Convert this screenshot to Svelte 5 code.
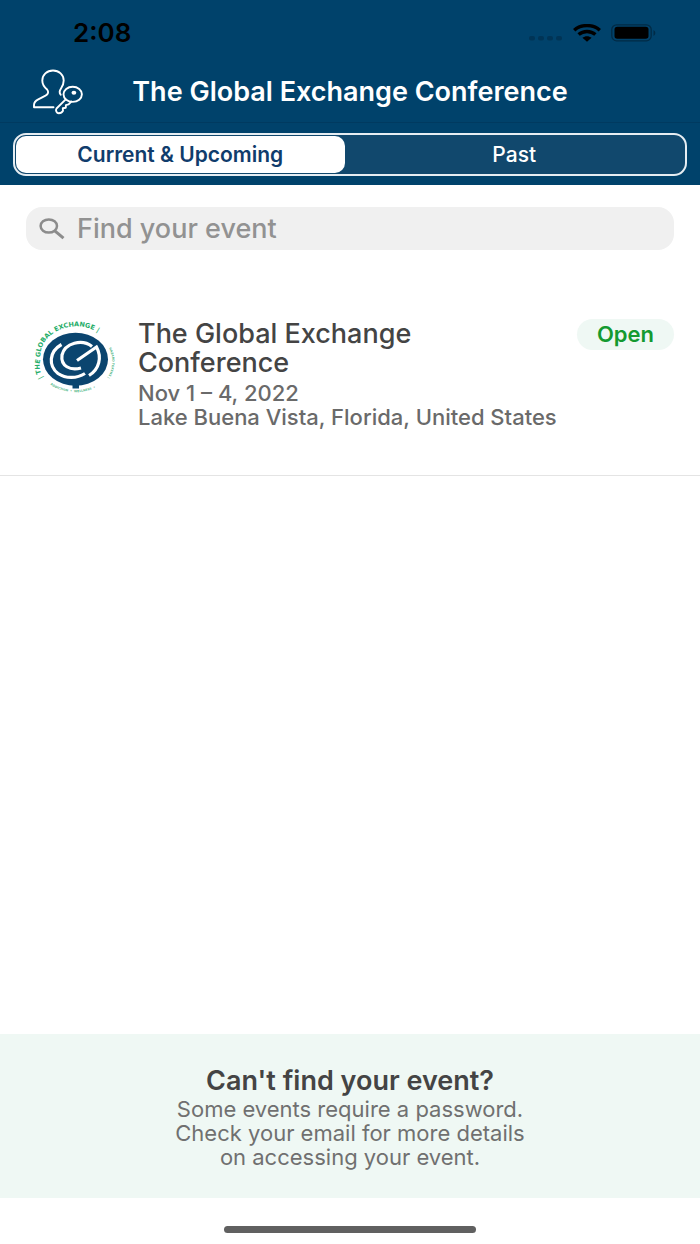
<script>
  let tab = $state('current');
  let query = $state('');
  const events = [
    {
      name: 'The Global Exchange Conference',
      dates: 'Nov 1 – 4, 2022',
      place: 'Lake Buena Vista, Florida, United States',
      status: 'Open',
      when: 'current'
    }
  ];
  let shown = $derived(
    events.filter((e) => e.when === tab && e.name.toLowerCase().includes(query.toLowerCase()))
  );
</script>

<div class="screen">
  <header>
    <div class="status">
      <span class="time">2:08</span>
      <div class="indicators">
        <svg width="34" height="18" viewBox="0 0 34 18" aria-hidden="true">
          <g fill="#003456">
            <rect x="0" y="12" width="6" height="4.500" rx="2" />
            <rect x="9" y="12" width="6" height="4.500" rx="2" />
            <rect x="18" y="12" width="6" height="4.500" rx="2" />
            <rect x="27" y="12" width="6" height="4.500" rx="2" />
          </g>
        </svg>
        <svg width="28" height="18" viewBox="0 0 28 18" aria-hidden="true">
          <g fill="none" stroke="#000" stroke-width="3.400">
            <path d="M1.200 6.200C8 0 20 0 26.800 6.200" />
            <path d="M5.600 10.600c4.700-4.200 12.100-4.200 16.800 0" />
          </g>
          <path d="M9.400 13.800c2.600-2.200 6.600-2.200 9.200 0L14 17.700z" />
        </svg>
        <svg width="45" height="18" viewBox="0 0 45 18" aria-hidden="true">
          <rect x=".8" y=".8" width="39.400" height="16" rx="4.800" fill="none" stroke="#002b46" stroke-width="1.300" />
          <rect x="3.500" y="2.800" width="34" height="12" rx="2.800" />
          <path d="M42.500 6v6c2.400-1.500 2.400-4.500 0-6z" fill="#002b46" />
        </svg>
      </div>
    </div>

    <div class="bar">
      <button class="account" aria-label="Log in">
        <svg width="52" height="46" viewBox="0 0 52 46" fill="none" stroke="#fff" stroke-width="1.900" stroke-linecap="round" stroke-linejoin="round">
          <path d="M21.500 38.300H2V36c0-2.600 1.600-4.200 4.300-5.600l7.200-3.700c3-1.700 3.300-4 1.600-6.200C11.500 17.500 10.300 15 10.300 11.500c0-5.600 4.600-10 10.700-10s10.700 4.400 10.700 10c0 3-1 5.600-2.700 8-1.700 2.300-1.800 4.300-.3 6.300" />
          <ellipse cx="40.700" cy="25.300" rx="9.200" ry="7.600" />
          <ellipse cx="41.900" cy="23.800" rx="2.400" ry="2" fill="#fff" stroke="none" />
          <path d="M33.700 30.300 24.500 39.500c-1.300 2 .2 4.800 2.300 4.800 2 0 3.400-1 4.200-2.500l-.2-2.600 3-.5.100-2.600 2.700-.7 2.700-2.800" />
        </svg>
      </button>
      <h1>The Global Exchange Conference</h1>
    </div>

    <div class="tabs" role="tablist">
      <button role="tab" aria-selected={tab === 'current'} class:active={tab === 'current'} onclick={() => (tab = 'current')}>Current &amp; Upcoming</button>
      <button role="tab" aria-selected={tab === 'past'} class:active={tab === 'past'} onclick={() => (tab = 'past')}>Past</button>
    </div>
  </header>

  <main>
    <label class="search">
      <svg width="26" height="22" viewBox="0 0 26 22" fill="none" stroke="#8c8c8c" stroke-width="2.500" aria-hidden="true">
        <ellipse cx="9.800" cy="8" rx="8.200" ry="6.600" />
        <path d="M15.800 12.800 24.500 20.200" stroke-width="3" />
      </svg>
      <input type="text" aria-label="Find your event" placeholder="Find your event" bind:value={query} />
    </label>

    {#each shown as event}
      <article>
        <svg class="logo" width="88" height="76" viewBox="6 6 88 76" aria-hidden="true">
          <defs>
            <path id="ring-top" d="M18 63A34.500 28.500 0 0 1 15.500 44.300A35 29 0 0 1 87 38" />
            <path id="ring-right" d="M84 33A40 34 0 0 1 80 66" />
            <path id="ring-bottom" d="M18 63A40 34 0 0 0 83 63" />
          </defs>
          <ellipse cx="50.500" cy="44.300" rx="32.500" ry="26.500" fill="#0b456f" />
          <path d="M47.500 69h6.500v4.500h-6.500z" fill="#0b456f" />
          <g fill="none" stroke="#fff" stroke-width="3.200">
            <path d="M36.500 29.500C23.500 37 23.500 51 33 58.500C41 64 52 63.500 60 58.500" />
            <path d="M67 31.500C57 23.500 40 28 37 40C35.500 51 45 56 56 53" />
            <path d="M52 45.500 71.500 32C77 42 74.500 54 64 60.500" />
          </g>
          <g class="ring" fill="#25ad68" font-size="6.500">
            <text><textPath href="#ring-top">| THE GLOBAL EXCHANGE |</textPath></text>
          </g>
          <g class="ring" fill="#54b98a" font-size="3">
            <text><textPath href="#ring-right">HAZARD TOKENS |</textPath></text>
            <text><textPath href="#ring-bottom" startOffset="10">ADDICTION &nbsp;•&nbsp; WELLNESS &nbsp;•</textPath></text>
          </g>
        </svg>
        <div class="info">
          <h2>{event.name}</h2>
          <p>{event.dates}</p>
          <p>{event.place}</p>
        </div>
        <span class="badge">{event.status}</span>
      </article>
    {/each}
  </main>

  <footer>
    <h2>Can't find your event?</h2>
    <p>Some events require a password.<br />Check your email for more details<br />on accessing your event.</p>
  </footer>
  <div class="home"><span></span></div>
</div>

<style>
  :global(body) { margin: 0; background: #fff; }
  .screen {
    display: flex;
    flex-direction: column;
    min-height: 100vh;
    font-family: Inter, "Liberation Sans", sans-serif;
    color: #444;
  }
  h1, h2, p { margin: 0; }
  button { font: inherit; border: 0; padding: 0; background: none; cursor: pointer; }
  header { background: #00426b; padding-bottom: 9px; }
  .status {
    display: flex;
    justify-content: space-between;
    align-items: center;
    height: 62px;
    padding: 3px 44px 0 73px;
    box-sizing: border-box;
    color: #000;
  }
  .time { font-size: 26px; font-weight: 600; }
  .indicators { display: flex; align-items: center; gap: 10px; }
  .bar {
    display: grid;
    grid-template-columns: 1fr auto 1fr;
    align-items: center;
    height: 60px;
    padding: 0 32px;
    border-bottom: 1px solid #003a60;
  }
  .account { justify-self: start; display: flex; }
  h1 { font-size: 27px; line-height: 32px; font-weight: 600; color: #fff; white-space: nowrap; }
  .tabs {
    display: grid;
    grid-template-columns: 329fr 340fr;
    margin: 10px 13px 0;
    padding: 1px;
    border: 2px solid #e6edf2;
    border-radius: 13px;
    background: #11486d;
  }
  .tabs button {
    height: 37px;
    border-radius: 10px;
    font-size: 21px;
    font-weight: 500;
    color: #fff;
  }
  .tabs .active { background: #fff; color: #103c6c; font-weight: 600; }
  main { flex: 1; }
  .search {
    display: flex;
    align-items: center;
    gap: 12px;
    height: 43px;
    margin: 22px 26px 0;
    padding: 0 13px;
    border-radius: 16px;
    background: #f0f0f0;
  }
  .search input {
    flex: 1;
    min-width: 0;
    border: 0;
    padding: 0;
    outline: 0;
    background: none;
    font: 500 27px/32px Inter, "Liberation Sans", sans-serif;
    color: #444;
  }
  .search input::placeholder { color: #929292; opacity: 1; }
  article {
    display: grid;
    grid-template-columns: 88px minmax(0, 1fr) auto;
    column-gap: 19px;
    margin-top: 69px;
    padding: 0 26px 46px 31px;
    border-bottom: 1px solid #e4e4e4;
  }
  .logo { margin-top: 2px; }
  .ring { font-family: "DejaVu Sans", sans-serif; font-weight: 700; }
  .info { grid-area: 1 / 2 / 2 / 4; }
  .info h2 {
    max-width: 320px;
    font-size: 27px;
    line-height: 29px;
    font-weight: 500;
  }
  .info h2 + p { margin-top: 4px; }
  .info p { font-size: 22px; line-height: 24px; font-weight: 500; color: #6a6a6a; }
  .badge {
    grid-area: 1 / 3;
    align-self: start;
    padding: 0 20px;
    border-radius: 16px;
    background: #eff8f4;
    color: #149a30;
    font-size: 22px;
    line-height: 31px;
    font-weight: 600;
  }
  footer { padding: 31px 24px 29px; background: #eff8f4; text-align: center; }
  footer h2 { font-size: 27px; line-height: 32px; font-weight: 600; }
  footer p { font-size: 22px; line-height: 24px; color: #707070; }
  .home { display: flex; justify-content: center; padding: 28px 0 11px; }
  .home span { width: 36%; height: 7px; border-radius: 4px; background: #606060; }
</style>
